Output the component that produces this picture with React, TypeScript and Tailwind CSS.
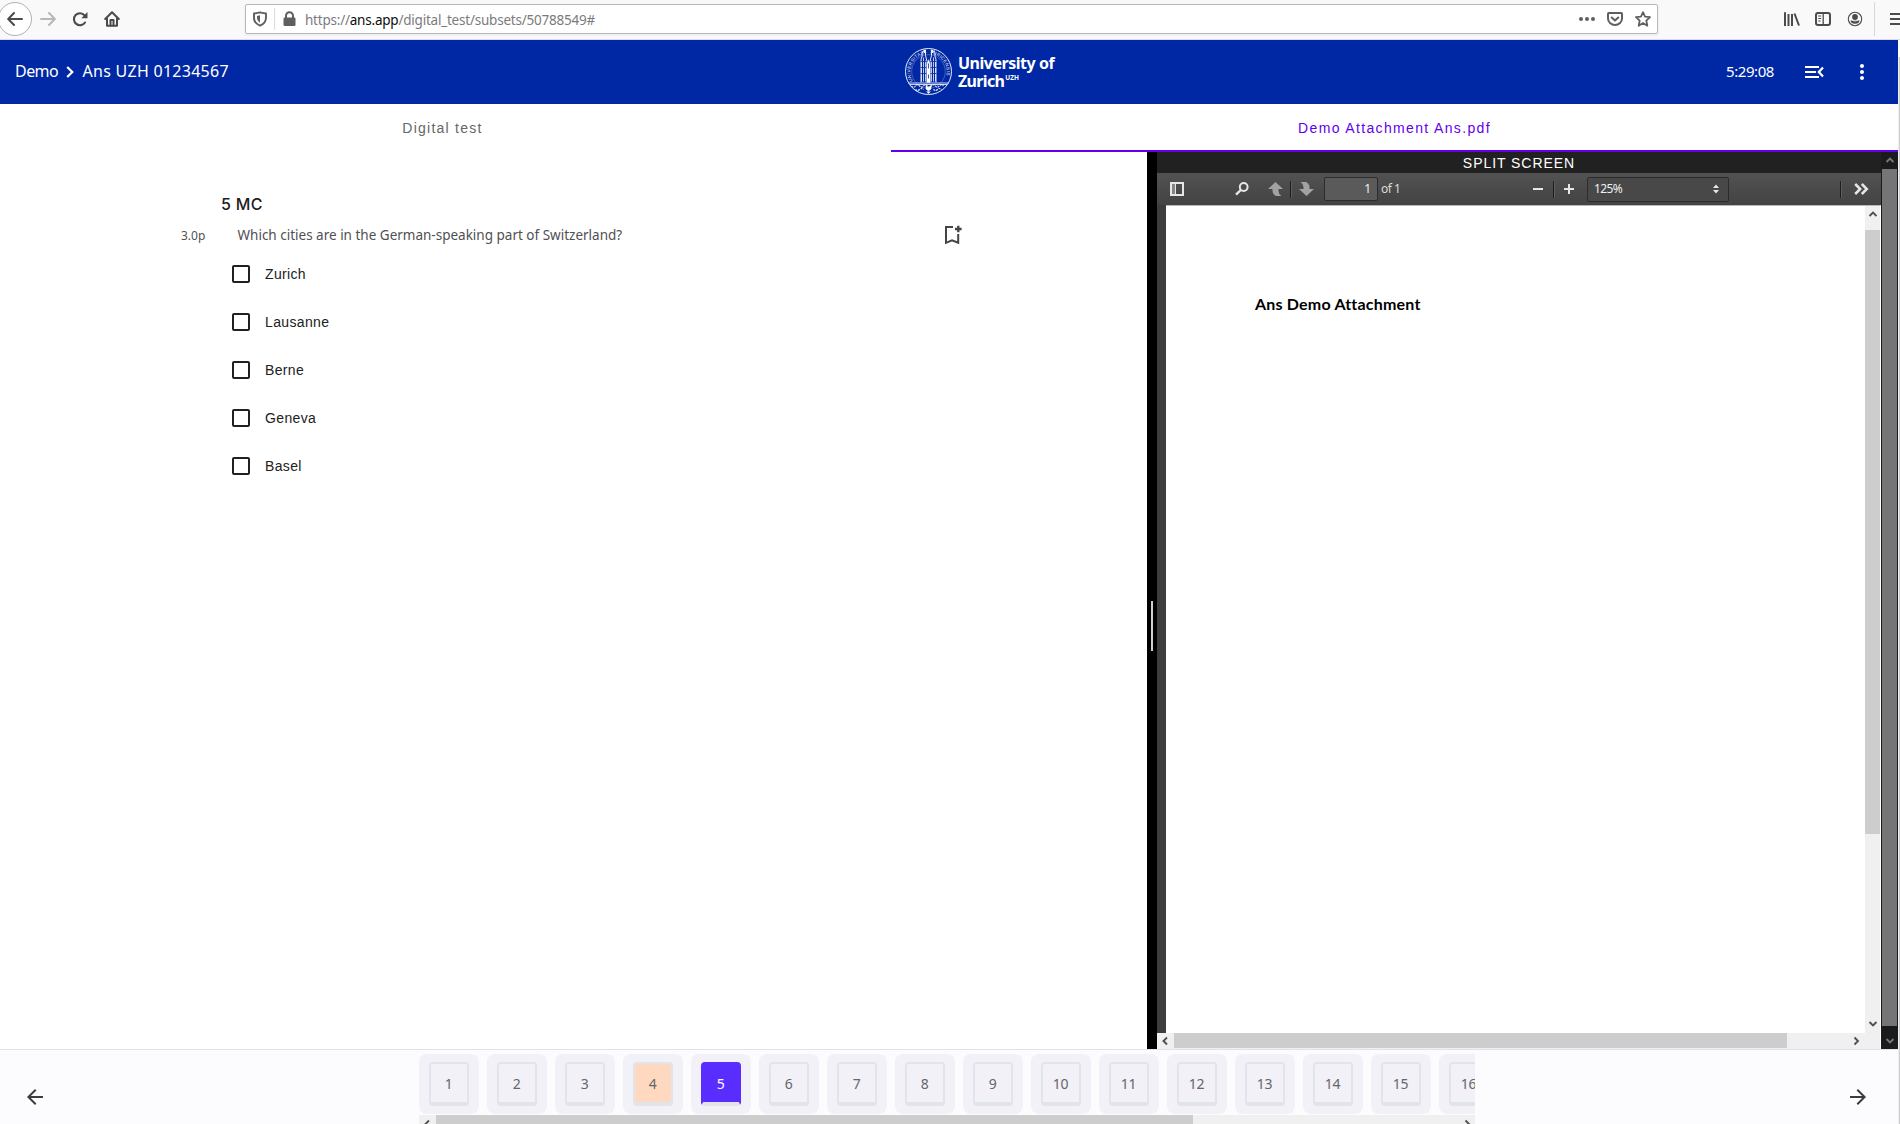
import type { ReactNode } from "react";
import { MdArrowBack, MdArrowForward, MdMoreVert } from "react-icons/md";

function BrowserBar() {
  return (
    <div className="flex h-10 w-full shrink-0 items-start overflow-hidden border-b border-[#dcdcde] bg-[#f9f9fa] text-[#4a4a4f]">
      <div className="-ml-[2px] mt-[2px] flex h-[34px] w-[34px] shrink-0 items-center justify-center rounded-full border border-[#b1b1b3] bg-white">
        <svg width="16" height="16" viewBox="0 0 16 16" fill="none" stroke="currentColor" strokeWidth="2" strokeLinecap="round" strokeLinejoin="round"><path d="M15 8H1.5M7 2L1.2 8L7 14" /></svg>
      </div>
      <svg className="ml-2 mt-[11px] shrink-0 text-[#b8b8ba]" width="16" height="16" viewBox="0 0 16 16" fill="none" stroke="currentColor" strokeWidth="2" strokeLinecap="round" strokeLinejoin="round"><path d="M1 8H14.5M9 2L14.8 8L9 14" /></svg>
      <svg className="ml-4 mt-[11px] shrink-0" width="16" height="16" viewBox="0 0 16 16" fill="none" stroke="currentColor" strokeWidth="2.1"><path d="M13 11.5A6 6 0 1 1 12.5 4.3" strokeLinecap="round" /><path d="M15.5 1V7.2H9.3Z" fill="currentColor" stroke="none" /></svg>
      <svg className="ml-4 mt-[11px] shrink-0" width="16" height="16" viewBox="0 0 16 16" fill="none" stroke="currentColor" strokeWidth="2" strokeLinecap="round" strokeLinejoin="round"><path d="M1.2 8L8 1.3L14.8 8M3 7.5V14.8H13V7.5" /><path d="M6.5 14.5V9H9.5V14.5" /></svg>
      <div className="ml-[125px] mt-1 flex h-[30px] w-[1413px] shrink-0 items-center rounded-[2px] border border-[#b9b9bb] bg-white pl-[7px] pr-[6px] text-[#5f5f62] shadow-[0_1px_3px_rgba(0,0,0,0.08)]">
        <svg className="shrink-0" width="14" height="16" viewBox="0 0 14 16" fill="none" stroke="currentColor" strokeWidth="1.9"><path d="M7 1.4C9 1.9 11 2.4 13 2.5V6.5C13 10.5 10.5 13.3 7 14.7C3.500 13.300 1 10.500 1 6.500V2.500C3 2.400 5 1.900 7 1.400Z" strokeLinejoin="round" /><path d="M7 4.300V11.700C5 10.500 4 8.800 4 6.600V4.900Z" fill="currentColor" stroke="none" /></svg>
        <div className="ml-[7px] h-[22px] w-px bg-[#dcdcde]" />
        <svg className="ml-2 shrink-0" width="13" height="16" viewBox="0 0 13 16"><path d="M3 8V4.700A3.500 3.500 0 0 1 10 4.700V8" fill="none" stroke="currentColor" strokeWidth="2" /><rect x="0.500" y="6.500" width="12" height="8.500" rx="1.300" fill="currentColor" /></svg>
        <span className="ml-[9px] whitespace-nowrap pt-[2px] font-['Noto_Sans'] text-[13.5px] leading-5 tracking-[-0.22px] text-[#7b7b7e]">
          https://<span className="text-[#0c0c0d]">ans.app</span>/digital_test/subsets/50788549#
        </span>
        <div className="ml-auto flex shrink-0 items-center">
          <svg width="16" height="16" viewBox="0 0 16 16" fill="currentColor"><circle cx="2" cy="8" r="2" /><circle cx="8" cy="8" r="2" /><circle cx="14" cy="8" r="2" /></svg>
          <svg className="ml-3" width="16" height="16" viewBox="0 0 16 16" fill="none" stroke="currentColor" strokeWidth="2" strokeLinecap="round" strokeLinejoin="round"><path d="M1.800 2H14.200Q15 2 15 2.800V7.500A7 6.500 0 0 1 1 7.500V2.800Q1 2 1.800 2Z" /><path d="M4.700 6.500L8 9.600L11.300 6.500" /></svg>
          <svg className="ml-3" width="16" height="16" viewBox="0 0 16 16" fill="none" stroke="currentColor" strokeWidth="1.800" strokeLinejoin="round"><path d="M8 1.200L10 5.700L15 6.200L11.300 9.600L12.300 14.700L8 12.100L3.700 14.700L4.700 9.600L1 6.200L6 5.700Z" /></svg>
        </div>
      </div>
      <svg className="ml-[126px] mt-[11px] shrink-0" width="16" height="16" viewBox="0 0 16 16" fill="none" stroke="currentColor" strokeWidth="2"><path d="M1 1.200V15M4.500 3V15M8 3V15" /><path d="M10.500 2.500L15 14.500" /></svg>
      <svg className="ml-[15px] mt-[11px] shrink-0" width="16" height="16" viewBox="0 0 16 16" fill="none" stroke="currentColor" strokeWidth="2"><rect x="1" y="2" width="14" height="12" rx="2" /><path d="M8.200 2V14" strokeWidth="1.300" /><path d="M3.200 5H6.200M3.200 7.500H6.200M3.200 10H5.500" strokeWidth="1" /></svg>
      <svg className="ml-4 mt-[11px] shrink-0" width="16" height="16" viewBox="0 0 16 16"><circle cx="8" cy="8" r="6.700" fill="none" stroke="currentColor" strokeWidth="1.100" /><circle cx="8" cy="6" r="2.900" fill="currentColor" /><path d="M3.500 9.500H12.500Q12 12.800 8 12.800Q4 12.800 3.500 9.500Z" fill="currentColor" /><path d="M5 9.200Q8 11 11 9.200" stroke="#f9f9fa" strokeWidth="0.800" fill="none" /></svg>
      <div className="ml-[11px] mt-[2px] h-[34px] w-px shrink-0 bg-[#d7d7db]" />
      <svg className="ml-[15px] mt-[11px] shrink-0" width="16" height="16" viewBox="0 0 16 16" stroke="currentColor" strokeWidth="2"><path d="M0 3H16M0 8H16M0 13H16" /></svg>
    </div>
  );
}

function Seal() {
  return (
    <svg className="shrink-0" width="48" height="48" viewBox="0 0 48 48" fill="none" stroke="white">
      <circle cx="23.500" cy="23.500" r="23" strokeWidth="0.900" />
      <circle cx="23.500" cy="23.500" r="16.800" strokeWidth="0.500" opacity="0.500" />
      <path id="seal-arc" d="M7.800 33A18.200 18.200 0 1 1 39.200 33" stroke="none" />
      <text fill="white" stroke="none" fontSize="4.600" fontFamily="Liberation Sans" opacity="0.900"><textPath href="#seal-arc" textLength="70">UNIVERSITAS · TURICENSIS</textPath></text>
      <g transform="translate(-0.500 -0.500)">
        <path d="M16.500 35V12L17.500 9V5.500L19 3L20 5.500V2.500H21V8L22.500 14V35M25.500 35V14L27 8V2.500H28V5.500L29.500 3L30.500 5.500V9L31.500 12V35" strokeWidth="0.900" />
        <path d="M17 13V34M19 10V34M21 13V34M27 13V34M29 10V34M31 13V34" strokeWidth="1" opacity="0.750" />
        <path d="M16 14H22M16 20H22M16 26H22M26 14H32M26 20H32M26 26H32" strokeWidth="0.800" stroke="#0028a5" />
        <path d="M24 12L22.500 17V35H25.500V17Z" fill="white" strokeWidth="0.300" />
        <path d="M24 16V21M24 27V31" stroke="#0028a5" strokeWidth="0.800" />
        <path d="M4 35.500H44M5.500 37H42.500" strokeWidth="0.800" />
        <path d="M7 38.500Q9 41 11 38.500T15 38.500T19 38.500T23 38.500T27 38.500T31 38.500T35 38.500T39 38.500M11 42Q13 44 15 42T19 42M29 42Q31 44 33 42T37 42" strokeWidth="1.100" strokeDasharray="2 0.800" opacity="0.900" />
        <path d="M21.500 38L24 40L26.500 38V41.500L24 43.500L21.500 41.500ZM22 44L24 46L26 44" fill="white" strokeWidth="0.600" />
      </g>
    </svg>
  );
}

function Header() {
  return (
    <header className="grid h-16 shrink-0 grid-cols-[905px_1fr_auto] items-center bg-[#0028a5] text-white">
      <div className="flex items-center pl-[15px] font-['Noto_Sans'] text-[16px] leading-6">
        <span className="-mt-[2px] w-[43px] tracking-[-0.55px]">Demo</span>
        <svg className="ml-2 mr-2" width="8" height="12" viewBox="0 0 8 12" fill="none" stroke="white" strokeWidth="2.200"><path d="M1.200 1L6.300 6L1.200 11" /></svg>
        <span className="-mt-[2px] pl-[0.500px] tracking-[0.270px]">Ans UZH 01234567</span>
      </div>
      <div className="flex items-center">
        <Seal />
        <div className="ml-[5px] flex flex-col font-['Noto_Sans'] text-[16px] font-bold leading-[18px]">
          <span className="self-start whitespace-nowrap tracking-[-0.480px]">University of</span>
          <span className="flex items-start self-start">
            <span className="tracking-[-0.650px]">Zurich</span>
            <span className="ml-px pt-px text-[6.500px] leading-[9px]">UZH</span>
          </span>
        </div>
      </div>
      <div className="flex items-center pr-6 font-['Noto_Sans'] text-[15px]">
        <span className="-mt-[2px] tracking-[-0.430px]">5:29:08</span>
        <svg className="ml-7" width="24" height="24" viewBox="0 0 24 24" fill="none" stroke="white" strokeWidth="2"><path d="M3 7H17M3 12H14M3 17H17" /><path d="M21 7.500L16.800 12L21 16.500" strokeWidth="2.300" /></svg>
        <MdMoreVert size={24} className="ml-6" />
      </div>
    </header>
  );
}

function Tabs() {
  return (
    <div className="flex h-12 shrink-0 bg-white font-['Liberation_Sans'] text-[14px] tracking-[1.250px]">
      <div className="flex w-[891px] items-center justify-center pr-[6px] text-[#666]">Digital test</div>
      <div className="flex flex-1 items-center justify-center border-b-2 border-[#6200ee] pt-[2px] tracking-[1.350px] text-[#6200ee]">Demo Attachment Ans.pdf</div>
    </div>
  );
}

const cities = ["Zurich", "Lausanne", "Berne", "Geneva", "Basel"];

function Question() {
  return (
    <main className="w-[1147px] shrink-0 bg-white">
      <h1 className="ml-[221px] mt-10 h-6 font-['Inter'] text-[16px] font-medium leading-6 tracking-[0.300px] text-[#1c1c1e]">5 MC</h1>
      <div className="mt-[5px] flex h-[28px] items-center pl-[181px] font-['Noto_Sans'] text-[#505054]">
        <span className="w-[56px] pt-px text-[12px]">3.0p</span>
        <span className="w-[703px] pl-[0.500px] pt-px text-[13.500px]">Which cities are in the German-speaking part of Switzerland?</span>
        <svg width="24" height="24" viewBox="0 0 24 24" fill="none" stroke="#444" strokeWidth="2"><path d="M13 4H6V19.800L12 17.300L18.200 19.800V11" /><path d="M18.300 2.700V9.300M15 6H21.600" strokeWidth="2.300" /></svg>
      </div>
      <div className="mt-px flex flex-col pl-[232px]">
        {cities.map((city) => (
          <label key={city} className="flex h-12 items-center font-['Liberation_Sans'] text-[14px] tracking-[0.350px] text-[#212121]">
            <span className="mr-[15px] h-[18px] w-[18px] rounded-[2px] border-2 border-[#212121]" />
            <span>{city}</span>
          </label>
        ))}
      </div>
    </main>
  );
}

function Chevron({ dir, color = "#505050" }: { dir: "up" | "down" | "left" | "right"; color?: string }) {
  const d = { up: "M1.500 6L5 2.500L8.500 6", down: "M1.500 3L5 6.500L8.500 3", left: "M6 1.500L2.500 5L6 8.500", right: "M3.500 1.500L7 5L3.500 8.500" }[dir];
  return <svg className="shrink-0" width="10" height="10" viewBox="0 0 10 10" fill="none" stroke={color} strokeWidth="1.900"><path d={d} /></svg>;
}

function Sep() {
  return <div className="h-[17px] w-[2px] shrink-0 border-l border-[#1e1e1e] bg-[#5c5c5c]" />;
}

function PdfToolbar() {
  return (
    <div className="flex h-8 shrink-0 items-center bg-gradient-to-b from-[#525252] to-[#434343] pl-[13px] font-['Noto_Sans'] text-[12px] text-[#dcdcdc]">
      <svg className="shrink-0" width="14" height="14" viewBox="0 0 14 14"><rect x="1" y="1" width="12" height="12" fill="none" stroke="#e6e6e6" strokeWidth="2" /><rect x="2" y="2" width="3" height="10" fill="#858585" /><path d="M5.500 2V12" stroke="#e6e6e6" /></svg>
      <svg className="ml-[51px] shrink-0" width="14" height="14" viewBox="0 0 14 14" fill="none" stroke="#e6e6e6"><circle cx="8.700" cy="5" r="3.900" strokeWidth="2" /><path d="M5.800 8L1 12.700" strokeWidth="2.400" /></svg>
      <svg className="ml-[19px] shrink-0" width="15" height="14" viewBox="0 0 15 14" fill="#a2a2a2"><path d="M7.500 0L15 7H10.500V9Q10.500 12 13.500 14H8Q4.500 12 4.500 8.500V7H0Z" /></svg>
      <div className="ml-[7px]"><Sep /></div>
      <svg className="ml-[7px] shrink-0" width="15" height="14" viewBox="0 0 15 14" fill="#a2a2a2"><path d="M7.500 14L15 7H10.500V5Q10.500 2 7 0H1.500Q4.500 2 4.500 5V7H0Z" /></svg>
      <div className="ml-[10px] flex h-6 w-[54px] shrink-0 items-center justify-end rounded-[2px] border border-[#2c2c2c] bg-[#5a5a5a] pr-[6px] text-[#f0f0f0]">1</div>
      <span className="ml-[3px] w-[152px] shrink-0 tracking-[-0.500px]">of 1</span>
      <div className="h-[2px] w-[10px] shrink-0 bg-[#e6e6e6]" />
      <div className="ml-[10px]"><Sep /></div>
      <svg className="ml-[9px] shrink-0" width="10" height="10" viewBox="0 0 10 10" stroke="#e6e6e6" strokeWidth="2"><path d="M0 5H10M5 0V10" /></svg>
      <div className="ml-[13px] flex h-[25px] w-[142px] shrink-0 items-center justify-between rounded-[2px] border border-[#2c2c2c] bg-[#484848] pl-[6px] pr-[9px] text-[#f0f0f0]">
        <span className="tracking-[-0.600px]">125%</span>
        <svg width="6" height="10" viewBox="0 0 6 10" fill="#e6e6e6"><path d="M3 0.500L6 4H0ZM3 9.500L6 6H0Z" /></svg>
      </div>
      <div className="ml-[111px]"><Sep /></div>
      <svg className="ml-3 shrink-0" width="15" height="12" viewBox="0 0 15 12" fill="none" stroke="#e6e6e6" strokeWidth="2.500"><path d="M1.200 1L6.200 6L1.200 11M7.800 1L12.800 6L7.800 11" /></svg>
    </div>
  );
}

function PdfViewer() {
  return (
    <div className="flex w-[724px] shrink-0 flex-col bg-[#3d3d3d]">
      <div className="flex h-[21px] shrink-0 items-center justify-center bg-[#212121] font-['Liberation_Sans'] text-[14px] leading-5 tracking-[0.950px] text-white">SPLIT SCREEN</div>
      <PdfToolbar />
      <div className="flex min-h-0 flex-1">
        <div className="flex w-[708px] flex-col">
          <div className="min-h-0 flex-1 pl-[9px]">
            <div className="h-full border-t border-[#b8b8b8] bg-white pl-[89px] pt-[88px] font-['Lato'] text-[16px] font-bold leading-5 tracking-[0.200px] text-black">Ans Demo Attachment</div>
          </div>
          <div className="flex h-4 shrink-0 bg-[#f0f0f0]">
            <div className="flex w-[17px] items-center justify-center"><Chevron dir="left" /></div>
            <div className="h-[15px] w-[613px] bg-[#cdcdcd]" />
            <div className="ml-auto flex w-[19px] items-center justify-center"><Chevron dir="right" /></div>
          </div>
        </div>
        <div className="flex w-4 flex-col items-center border-r border-t border-t-[#b8b8b8] border-r-white bg-[#f0f0f0]">
          <div className="flex h-6 w-full shrink-0 items-start justify-center pt-1"><Chevron dir="up" /></div>
          <div className="h-[604px] w-full bg-[#cdcdcd]" />
          <div className="mb-5 mt-auto"><Chevron dir="down" /></div>
        </div>
      </div>
    </div>
  );
}

function OuterScrollbar() {
  return (
    <div className="flex w-[17px] flex-col items-center bg-[#1a1b1d]">
      <div className="flex h-[17px] items-center"><Chevron dir="up" color="#77777a" /></div>
      <div className="h-[857px] w-[15px] bg-[#757577]" />
      <div className="mt-auto flex h-[17px] items-center"><Chevron dir="down" color="#77777a" /></div>
    </div>
  );
}

const numbers = Array.from({ length: 16 }, (_, i) => i + 1);

function NumberTile({ n }: { n: number }) {
  const look = n === 4 ? "border-[#e1e4e8] bg-[#ffd8c0] text-[#666]" : n === 5 ? "border-x-[#5a2dff] border-t-[#5a2dff] border-b-[#e1e4e8] bg-[#5a2dff] text-white" : "border-[#e1e4e8] bg-[#f2f1f7] text-[#65656a]";
  return (
    <div className="flex h-[60px] w-[60px] shrink-0 items-center justify-center rounded-[8px] bg-[#f2f1f7]">
      <div className={`flex h-11 w-10 shrink-0 items-center justify-center rounded-[4px] border-2 border-b-4 pr-px pt-[2px] font-['Noto_Sans'] text-[14px] leading-5 tracking-[-0.300px] ${look}`}>{n}</div>
    </div>
  );
}

function Footer() {
  return (
    <footer className="flex h-[75px] shrink-0 border-t border-[#e1e1e9] bg-[#fcfcff] text-[#3c3c3c]">
      <div className="w-[419px] shrink-0 pl-[23px] pt-[35px]"><MdArrowBack size={24} /></div>
      <div className="flex w-[1056px] shrink-0 flex-col overflow-hidden pt-1">
        <div className="flex shrink-0 gap-2 overflow-hidden">{numbers.map((n) => <NumberTile key={n} n={n} />)}</div>
        <div className="mt-px flex h-[17px] shrink-0 bg-[#f0f0f0]">
          <div className="flex w-[17px] items-center justify-center"><Chevron dir="left" /></div>
          <div className="w-[757px] bg-[#cdcdcd]" />
          <div className="ml-auto flex w-[17px] items-center justify-center"><Chevron dir="right" /></div>
        </div>
      </div>
      <div className="flex-1 pl-[371px] pt-[35px]"><MdArrowForward size={24} /></div>
    </footer>
  );
}

function Page({ children }: { children: ReactNode }) {
  return (
    <div className="flex min-h-0 flex-1">
      <div className="flex w-[1898px] flex-col">{children}</div>
      <div className="mt-[17px] w-[2px] border-r border-[#cdcdcd] bg-[#f0f0f0]" />
    </div>
  );
}

export default function App() {
  return (
    <div className="flex h-[1124px] w-[1900px] flex-col overflow-hidden bg-white">
      <BrowserBar />
      <Page>
        <Header />
        <Tabs />
        <div className="flex min-h-0 flex-1">
          <Question />
          <div className="flex w-[10px] shrink-0 items-center justify-center bg-black">
            <div className="mt-[51px] h-[50px] w-[2px] bg-[#cfcfcf]" />
          </div>
          <PdfViewer />
          <OuterScrollbar />
        </div>
        <Footer />
      </Page>
    </div>
  );
}
